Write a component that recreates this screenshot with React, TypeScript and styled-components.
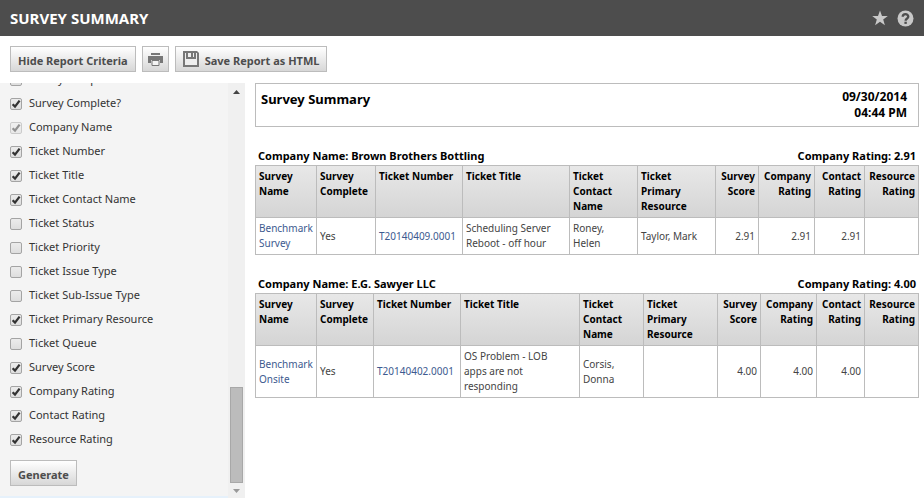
import React from "react";
import styled, { createGlobalStyle } from "styled-components";

const Global = createGlobalStyle`
  *, *::before, *::after { box-sizing: border-box; }
  body { margin: 0; background: #fff; color: #333; font: 11px/15px "Noto Sans", "Open Sans", sans-serif; }
  button, input { font: inherit; }
`;

const Page = styled.div`
  display: flex;
  flex-direction: column;
  height: 100vh;
`;

const TitleBar = styled.header`
  display: flex;
  align-items: center;
  flex: none;
  height: 36px;
  padding: 0 10px;
  background: #4d4d4d;
  color: #fff;
`;

const PageTitle = styled.h1`
  flex: 1;
  margin: 0;
  font-size: 15px;
  line-height: 20px;
`;

const IconButton = styled.button`
  display: flex;
  margin: 0 0 0 9px;
  padding: 0;
  border: 0;
  background: none;
  color: #c8c8c8;
`;

const Toolbar = styled.div`
  display: flex;
  flex: none;
  gap: 6px;
  padding: 10px 10px 11px;
`;

const Button = styled.button`
  display: flex;
  flex: none;
  align-items: center;
  gap: 6px;
  height: 26px;
  padding: 3px 7px 0;
  border: 1px solid #bcbcbc;
  background: linear-gradient(#fff, #d7d7d7);
  color: #4d4d4d;
  font-weight: bold;
  white-space: nowrap;

  svg { margin-top: -3px; }
`;

const PrintButton = styled(Button)`
  padding: 3px 4px 0;
`;

const Main = styled.div`
  display: flex;
  flex: 1;
  min-height: 0;
`;

const Sidebar = styled.aside`
  display: flex;
  flex: none;
  width: 245px;
  background: #f4f4f4;
`;

const Criteria = styled.form`
  display: flex;
  flex: 1;
  flex-direction: column;
  justify-content: flex-end;
  align-items: flex-start;
  overflow: hidden;
  border-bottom: 2px solid #e6f1fb;
  padding: 0 0 10px 10px;
`;

const Fields = styled.div`
  display: flex;
  flex-direction: column;
  flex: none;
  margin-bottom: 9px;
`;

const Field = styled.label`
  display: flex;
  align-items: center;
  gap: 7px;
  height: 24px;
  padding-bottom: 2px;
`;

const Check = styled.input`
  appearance: none;
  width: 12px;
  height: 12px;
  margin: 3px 0 0;
  border: 1px solid #a4a4a4;
  border-radius: 2px;
  background: linear-gradient(#ececec, #dedede);

  &:checked {
    background: url("data:image/svg+xml,%3Csvg xmlns='http://www.w3.org/2000/svg' viewBox='0 0 10 10'%3E%3Cpath d='M1.6 5.2 4 7.6 8.6 1.6' fill='none' stroke='%23333' stroke-width='2.3'/%3E%3C/svg%3E"), linear-gradient(#ececec, #dedede);
  }

  &:disabled { opacity: 0.5; }
`;

const ScrollTrack = styled.div`
  display: flex;
  flex-direction: column;
  align-items: center;
  flex: none;
  width: 17px;
  padding: 7px 2px 5px;
  background: #f0f0f0;
`;

const ScrollSpace = styled.div`
  flex: 1;
`;

const ScrollThumb = styled.div`
  width: 13px;
  height: 96px;
  margin-bottom: 6px;
  border: 1px solid #a8a8a8;
  background: #bcbcbc;
`;

const Report = styled.main`
  flex: 1;
  min-width: 0;
  padding: 0 5px 0 10px;
  color: #000;
`;

const ReportHeader = styled.div`
  display: flex;
  justify-content: space-between;
  height: 44px;
  padding: 5px 11px 0 5px;
  border: 1px solid #bcbcbc;
`;

const ReportTitle = styled.h2`
  margin: 0;
  font-size: 13px;
  line-height: 20px;
`;

const Stamp = styled.div`
  font-size: 12px;
  font-weight: bold;
  line-height: 16px;
  text-align: right;
`;

const Group = styled.section`
  margin-top: 19px;
`;

const GroupHeader = styled.div`
  display: flex;
  justify-content: space-between;
  padding: 0 3px;
  font-weight: bold;
  line-height: 19px;
`;

const Table = styled.table`
  width: 100%;
  border-collapse: collapse;
  table-layout: fixed;
  font-size: 10px;
`;

const Column = styled.col<{ $width?: number }>`
  width: ${(p) => (p.$width ? `${p.$width}px` : "auto")};
`;

const HeadRow = styled.tr`
  background: linear-gradient(#e8e8e8, #d4d4d4);
`;

const HeadCell = styled.th<{ $right?: boolean }>`
  padding: 3px 3px;
  border: 1px solid #bcbcbc;
  text-align: ${(p) => (p.$right ? "right" : "left")};
  vertical-align: top;
`;

const Cell = styled.td<{ $right?: boolean }>`
  padding: 3px 3px;
  border: 1px solid #bcbcbc;
  color: #444;
  text-align: ${(p) => (p.$right ? "right" : "left")};
  white-space: pre-line;
`;

const Link = styled.a`
  color: #3d5a8f;
  text-decoration: none;
`;

const StarIcon = () => (
  <svg width="16" height="16" viewBox="0 0 16 16" fill="currentColor">
    <path d="M8 .5 10 6h5.8l-4.6 3.5 1.7 5.7L8 11.8l-4.9 3.4 1.7-5.7L.2 6H6z" />
  </svg>
);

const HelpIcon = () => (
  <svg width="17" height="17" viewBox="0 0 17 17">
    <circle cx="8.5" cy="8.5" r="8" fill="currentColor" />
    <path d="M5.700 6.800c0-3.600 5.600-3.600 5.600 0 0 1.700-2.700 1.700-2.700 3.900" fill="none" stroke="#4d4d4d" strokeWidth="2.300" />
    <path d="M7.400 11.700h2.400v2.200H7.400z" fill="#4d4d4d" />
  </svg>
);

const PrintIcon = () => (
  <svg width="17" height="16" viewBox="0 0 17 16" fill="#777">
    <path d="M4 2h9v2H4zM1 5h15v7h-3V9H4v3H1z" />
    <path d="M5 9.500h7v5H5z" fill="#f4f4f4" stroke="#777" />
  </svg>
);

const SaveIcon = () => (
  <svg width="16" height="16" viewBox="0 0 16 16">
    <path d="M0 0h14l2 2v14H0z" fill="#777" />
    <path d="M2 2h1v6h10V2h1v12H2z" fill="#eee" />
    <path d="M5 2h3v4H5zM10 2h1v4h-1z" fill="#eee" />
  </svg>
);

const Arrow = ({ down }: { down?: boolean }) => (
  <svg width="7" height="4" viewBox="0 0 7 4">
    <path d={down ? "M0 0h7L3.500 4z" : "M0 4h7L3.500 0z"} fill={down ? "#999" : "#444"} />
  </svg>
);

const fields: { label: string; checked?: boolean; disabled?: boolean }[] = [
  { label: "Survey Completed" },
  { label: "Survey Complete?", checked: true },
  { label: "Company Name", checked: true, disabled: true },
  { label: "Ticket Number", checked: true },
  { label: "Ticket Title", checked: true },
  { label: "Ticket Contact Name", checked: true },
  { label: "Ticket Status" },
  { label: "Ticket Priority" },
  { label: "Ticket Issue Type" },
  { label: "Ticket Sub-Issue Type" },
  { label: "Ticket Primary Resource", checked: true },
  { label: "Ticket Queue" },
  { label: "Survey Score", checked: true },
  { label: "Company Rating", checked: true },
  { label: "Contact Rating", checked: true },
  { label: "Resource Rating", checked: true },
];

const headings = [
  "Survey Name",
  "Survey Complete",
  "Ticket Number",
  "Ticket Title",
  "Ticket Contact Name",
  "Ticket Primary Resource",
  "Survey Score",
  "Company Rating",
  "Contact Rating",
  "Resource Rating",
];
const linkColumns = [0, 2];
const firstNumericColumn = 6;

const groups = [
  {
    company: "Brown Brothers Bottling",
    rating: "2.91",
    widths: [61, 59, 87, 0, 68, 78, 43, 56, 50, 54],
    row: ["Benchmark Survey", "Yes", "T20140409.0001", "Scheduling Server Reboot - off hour", "Roney,\nHelen", "Taylor, Mark", "2.91", "2.91", "2.91", ""],
  },
  {
    company: "E.G. Sawyer LLC",
    rating: "4.00",
    widths: [61, 57, 87, 0, 64, 74, 43, 56, 48, 54],
    row: ["Benchmark Onsite", "Yes", "T20140402.0001", "OS Problem - LOB\napps are not\nresponding", "Corsis,\nDonna", "", "4.00", "4.00", "4.00", ""],
  },
];

export default function App() {
  return (
    <Page>
      <Global />
      <TitleBar>
        <PageTitle>SURVEY SUMMARY</PageTitle>
        <IconButton aria-label="Bookmark"><StarIcon /></IconButton>
        <IconButton aria-label="Help"><HelpIcon /></IconButton>
      </TitleBar>
      <Toolbar>
        <Button>Hide Report Criteria</Button>
        <PrintButton aria-label="Print"><PrintIcon /></PrintButton>
        <Button><SaveIcon />Save Report as HTML</Button>
      </Toolbar>
      <Main>
        <Sidebar>
          <Criteria>
            <Fields>
              {fields.map((f) => (
                <Field key={f.label}>
                  <Check type="checkbox" defaultChecked={f.checked} disabled={f.disabled} />
                  {f.label}
                </Field>
              ))}
            </Fields>
            <Button type="button">Generate</Button>
          </Criteria>
          <ScrollTrack>
            <Arrow />
            <ScrollSpace />
            <ScrollThumb />
            <Arrow down />
          </ScrollTrack>
        </Sidebar>
        <Report>
          <ReportHeader>
            <ReportTitle>Survey Summary</ReportTitle>
            <Stamp>09/30/2014<br />04:44 PM</Stamp>
          </ReportHeader>
          {groups.map((g) => (
            <Group key={g.company}>
              <GroupHeader>
                <span>Company Name: {g.company}</span>
                <span>Company Rating: {g.rating}</span>
              </GroupHeader>
              <Table>
                <colgroup>
                  {g.widths.map((w, c) => <Column key={c} $width={w} />)}
                </colgroup>
                <thead>
                  <HeadRow>
                    {headings.map((h, c) => (
                      <HeadCell key={h} scope="col" $right={c >= firstNumericColumn}>{h}</HeadCell>
                    ))}
                  </HeadRow>
                </thead>
                <tbody>
                  <tr>
                    {g.row.map((v, c) => (
                      <Cell key={c} $right={c >= firstNumericColumn}>
                        {linkColumns.includes(c) ? <Link href="#">{v}</Link> : v}
                      </Cell>
                    ))}
                  </tr>
                </tbody>
              </Table>
            </Group>
          ))}
        </Report>
      </Main>
    </Page>
  );
}
